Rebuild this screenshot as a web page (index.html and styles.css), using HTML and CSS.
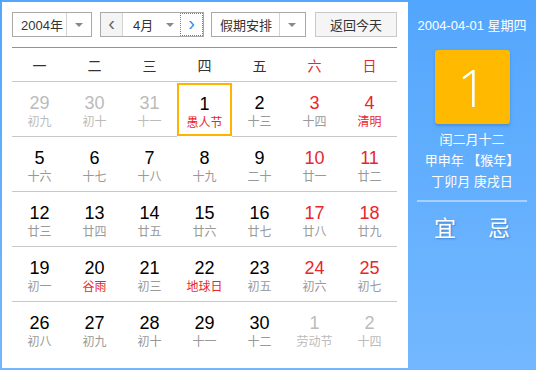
FILE: index.html
```html
<!DOCTYPE html>
<html lang="zh-CN">
<head>
    <meta charset="UTF-8">
    <title>万年历</title>
    <link rel="stylesheet" href="styles.css">
</head>
<body>
    <div class="calendar">
        <div class="main">
            <div class="toolbar">
                <div class="select year">
                    <span class="select-text">2004年</span>
                    <span class="select-arrow"></span>
                </div>
                <div class="select month">
                    <span class="nav prev">&lsaquo;</span>
                    <span class="select-text">4月</span>
                    <span class="select-arrow plain"></span>
                    <span class="nav next">&rsaquo;</span>
                </div>
                <div class="select holiday">
                    <span class="select-text">假期安排</span>
                    <span class="select-arrow"></span>
                </div>
                <button class="today-btn">返回今天</button>
            </div>

            <div class="week">
                <span>一</span><span>二</span><span>三</span><span>四</span><span>五</span>
                <span class="red">六</span><span class="red">日</span>
            </div>

            <div class="days">
                <div class="day other"><b>29</b><i>初九</i></div>
                <div class="day other"><b>30</b><i>初十</i></div>
                <div class="day other"><b>31</b><i>十一</i></div>
                <div class="day selected"><b>1</b><i class="red">愚人节</i></div>
                <div class="day"><b>2</b><i>十三</i></div>
                <div class="day weekend"><b>3</b><i>十四</i></div>
                <div class="day weekend"><b>4</b><i class="red">清明</i></div>

                <div class="day"><b>5</b><i>十六</i></div>
                <div class="day"><b>6</b><i>十七</i></div>
                <div class="day"><b>7</b><i>十八</i></div>
                <div class="day"><b>8</b><i>十九</i></div>
                <div class="day"><b>9</b><i>二十</i></div>
                <div class="day weekend"><b>10</b><i>廿一</i></div>
                <div class="day weekend"><b>11</b><i>廿二</i></div>

                <div class="day"><b>12</b><i>廿三</i></div>
                <div class="day"><b>13</b><i>廿四</i></div>
                <div class="day"><b>14</b><i>廿五</i></div>
                <div class="day"><b>15</b><i>廿六</i></div>
                <div class="day"><b>16</b><i>廿七</i></div>
                <div class="day weekend"><b>17</b><i>廿八</i></div>
                <div class="day weekend"><b>18</b><i>廿九</i></div>

                <div class="day"><b>19</b><i>初一</i></div>
                <div class="day"><b>20</b><i class="red">谷雨</i></div>
                <div class="day"><b>21</b><i>初三</i></div>
                <div class="day"><b>22</b><i class="red">地球日</i></div>
                <div class="day"><b>23</b><i>初五</i></div>
                <div class="day weekend"><b>24</b><i>初六</i></div>
                <div class="day weekend"><b>25</b><i>初七</i></div>

                <div class="day last"><b>26</b><i>初八</i></div>
                <div class="day last"><b>27</b><i>初九</i></div>
                <div class="day last"><b>28</b><i>初十</i></div>
                <div class="day last"><b>29</b><i>十一</i></div>
                <div class="day last"><b>30</b><i>十二</i></div>
                <div class="day last other"><b>1</b><i>劳动节</i></div>
                <div class="day last other"><b>2</b><i>十四</i></div>
            </div>
        </div>

        <div class="side">
            <div class="side-date">2004-04-01 星期四</div>
            <div class="big-day">1</div>
            <div class="lunar">
                <div>闰二月十二</div>
                <div>甲申年 【猴年】</div>
                <div>丁卯月 庚戌日</div>
            </div>
            <div class="side-line"></div>
            <div class="yiji">
                <span>宜</span>
                <span>忌</span>
            </div>
        </div>
    </div>
</body>
</html>
```

FILE: styles.css
```css
body {
    margin: 0;
    font-family: "Liberation Sans", "Noto Sans CJK SC", Arial, sans-serif;
}
.calendar {
    width: 536px;
    height: 370px;
    box-sizing: border-box;
    padding: 2px 0 2px 2px;
    display: flex;
    background: linear-gradient(to bottom, #53a6fd, #73b8ff);
}
.main {
    width: 406px;
    background-color: white;
    box-sizing: border-box;
    padding: 10px 0 0 10px;
}
.toolbar {
    display: flex;
    height: 25px;
    width: 385px;
    padding-bottom: 10px;
    border-bottom: 1px solid #4da3fb;
}
.select {
    display: flex;
    align-items: center;
    height: 25px;
    box-sizing: border-box;
    border: 1px solid #a9a9a9;
    font-size: 13px;
    color: #333;
    background-color: white;
}
.select-text {
    flex: 1;
    padding-left: 8px;
}
.select-arrow {
    width: 24px;
    height: 100%;
    border-left: 1px solid #d4d4d4;
    position: relative;
}
.select-arrow::after {
    content: "";
    position: absolute;
    left: 8px;
    top: 10px;
    border-left: 4px solid transparent;
    border-right: 4px solid transparent;
    border-top: 4px solid #888;
}
.select-arrow.plain {
    border-left: none;
    width: 20px;
}
.select-arrow.plain::after {
    left: 6px;
}
.year {
    width: 80px;
}
.month {
    width: 104px;
    margin-left: 8px;
}
.month .select-text {
    padding-left: 10px;
}
.nav {
    width: 22px;
    height: 100%;
    display: flex;
    align-items: center;
    justify-content: center;
    font-size: 20px;
    line-height: 1;
    padding-bottom: 3px;
    box-sizing: border-box;
}
.prev {
    background-color: #f4f4f4;
    border-right: 1px solid #d4d4d4;
    color: #666;
}
.next {
    color: #2f8ef0;
    outline: 1px dotted #2f8ef0;
    outline-offset: -1px;
    width: 23px;
}
.holiday {
    width: 95px;
    margin-left: 7px;
}
.holiday .select-arrow {
    width: 25px;
}
.today-btn {
    margin-left: 9px;
    width: 82px;
    height: 25px;
    border: 1px solid #c9c9c9;
    background-color: #f5f5f5;
    font-family: "Noto Sans CJK SC", sans-serif;
    font-size: 13px;
    color: #333;
    padding: 0;
}
.week {
    display: grid;
    grid-template-columns: repeat(7, 55px);
    height: 33px;
    align-items: center;
    border-bottom: 1px solid #c8c8c8;
    font-size: 14px;
    color: #333;
    text-align: center;
    width: 385px;
}
.red {
    color: #e8262d;
}
.days {
    display: grid;
    grid-template-columns: repeat(7, 55px);
    width: 385px;
}
.day {
    height: 55px;
    box-sizing: border-box;
    border-bottom: 1px solid #c8c8c8;
    display: flex;
    flex-direction: column;
    align-items: center;
    padding-top: 11px;
}
.day.last {
    border-bottom: none;
}
.day b {
    font-weight: normal;
    font-size: 18px;
    line-height: 20px;
    color: #000;
}
.day i {
    font-style: normal;
    font-size: 12px;
    line-height: 16px;
    margin-top: 1px;
    color: #999;
}
.day.weekend b {
    color: #e8262d;
}
.day.other b,
.day.other i {
    color: #bbb;
}
.day i.red {
    color: #e8262d;
}
.day.selected {
    border: 2px solid #ffb300;
    padding-top: 9px;
    margin-top: 1px;
    height: 53px;
}
.side {
    flex: 1;
    display: flex;
    flex-direction: column;
    align-items: center;
    color: white;
    padding-top: 14px;
}
.side-date {
    font-size: 13px;
    line-height: 20px;
}
.big-day {
    margin-top: 14px;
    width: 75px;
    height: 74px;
    border-radius: 3px;
    background-color: #ffba00;
    box-shadow: 0 2px 3px rgba(0, 60, 140, 0.25);
    font-size: 52px;
    font-weight: 300;
    font-family: "Open Sans", "Liberation Sans", sans-serif;
    line-height: 74px;
    text-align: center;
}
.lunar {
    margin-top: 5px;
    font-size: 13px;
    line-height: 21px;
    text-align: center;
}
.side-line {
    margin-top: 8px;
    width: 110px;
    height: 2px;
    background-color: #a6d0fd;
}
.yiji {
    margin-top: 12px;
    display: flex;
    gap: 32px;
    font-size: 22px;
    line-height: 30px;
    text-shadow: 1px 1px 2px rgba(0, 50, 120, 0.35);
}
```
